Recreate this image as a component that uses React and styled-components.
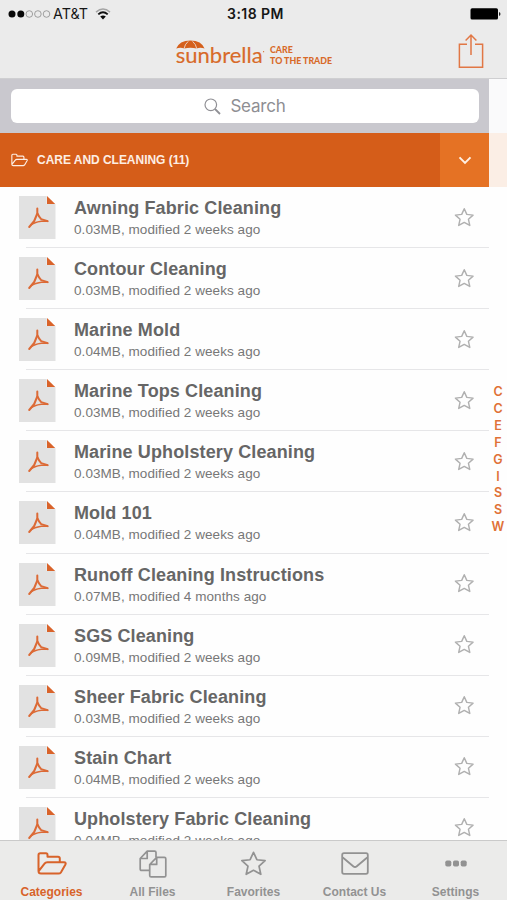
import React from "react";
import styled, { createGlobalStyle } from "styled-components";

const Global = createGlobalStyle`
  * { box-sizing: border-box; }
  body { margin: 0; background: #fff; overflow: hidden; }
  svg { display: block; flex: none; }
`;

const Screen = styled.div`
  width: 507px;
  height: 900px;
  display: flex;
  flex-direction: column;
  overflow: hidden;
  background: #fefefe;
  font-family: "Liberation Sans", Arial, sans-serif;
`;

const Header = styled.header`
  flex: none;
  height: 79px;
  background: #ebebeb;
  border-bottom: 1px solid #cfcfd1;
`;

const StatusBar = styled.div`
  height: 27px;
  display: grid;
  grid-template-columns: 1fr auto 1fr;
  align-items: center;
  padding: 0 6px 0 8px;
  font: 500 13.5px "Inter", sans-serif;
  color: #161616;
`;

const Carrier = styled.div`
  display: flex;
  align-items: center;
  font-weight: 400;
  letter-spacing: 0;
  span { margin: 0 7px 0 2px; font-size: 14.3px; }
`;

const Clock = styled.div`
  font-weight: 600;
  font-size: 14px;
  letter-spacing: 0.45px;
  padding-left: 2px;
`;

const Power = styled.div`
  display: flex;
  justify-content: flex-end;
`;

const NavBar = styled.div`
  height: 51px;
  display: flex;
  justify-content: space-between;
  padding: 6px 23px 0 175px;
`;

const Brand = styled.div`
  display: flex;
  color: #d86a29;
`;

const Tagline = styled.div`
  margin: 12px 0 0 5px;
  font: 900 8.8px/10.5px "Lato", sans-serif;
  letter-spacing: 0;
  white-space: nowrap;
`;

const Content = styled.main`
  flex: 1;
  min-height: 0;
  display: grid;
  grid-template-columns: 489px 18px;
  overflow: hidden;
`;

const Column = styled.div`
  min-width: 0;
`;

const SearchBar = styled.div`
  height: 54px;
  padding: 10px 10px 10px 11px;
  background: #c9c8ce;
`;

const SearchField = styled.div`
  height: 34px;
  border-radius: 6px;
  background: #fff;
  display: flex;
  align-items: center;
  justify-content: center;
  gap: 9px;
  color: #8e8e93;
  font: 400 17px "Inter", sans-serif;
  letter-spacing: -0.2px;
`;

const CategoryBar = styled.div`
  height: 54px;
  display: flex;
  align-items: center;
  background: #d55d19;
  color: #fdeee4;
  padding-left: 11px;
`;

const CategoryName = styled.div`
  flex: 1;
  margin-left: 9px;
  font-size: 12px;
  font-weight: 700;
  letter-spacing: -0.03px;
`;

const Toggle = styled.div`
  width: 49px;
  height: 100%;
  background: #e57224;
  display: flex;
  align-items: center;
  justify-content: center;
`;

const Row = styled.div`
  height: 61.1px;
  display: flex;
  align-items: flex-start;
  padding: 9px 15px 0 19px;
  background: linear-gradient(#e6e6e8, #e6e6e8) 26px 100% / 463px 1px no-repeat;
`;

const FileText = styled.div`
  flex: 1;
  margin-left: 18px;
  padding-top: 2px;
  white-space: nowrap;
`;

const FileName = styled.div`
  font-size: 18px;
  line-height: 21px;
  font-weight: 700;
  letter-spacing: 0.12px;
  color: #666;
`;

const FileMeta = styled.div`
  margin-top: 2px;
  font-size: 13.5px;
  line-height: 17px;
  letter-spacing: 0.06px;
  color: #777;
`;

const StarSlot = styled.div`
  padding-top: 10.5px;
`;

const IndexRail = styled.aside`
  display: flex;
  flex-direction: column;
`;

const RailCell = styled.div`
  height: 54px;
  flex: none;
  background: ${(p) => p.$tint};
`;

const Letters = styled.div`
  margin-top: 197px;
  display: flex;
  flex-direction: column;
  align-items: center;
  font: 600 12.5px/16.9px "Inter", sans-serif;
  color: #e07137;
`;

const TabBar = styled.nav`
  flex: none;
  height: 60px;
  display: grid;
  grid-template-columns: repeat(5, 101px);
  padding-left: 1px;
  border-top: 1px solid #cacaca;
  background: #ebebea;
`;

const Tab = styled.div`
  display: flex;
  flex-direction: column;
  align-items: center;
  color: ${(p) => (p.$active ? "#d8632a" : "#929292")};
  font-size: 12px;
  font-weight: 700;
  letter-spacing: 0;
  white-space: nowrap;
`;

const TabIcon = styled.div`
  height: 44px;
  padding-top: 1px;
  display: flex;
  align-items: center;
`;

const starPath =
  "M10 1.7 L12.5 7.2 L18.6 7.9 L14.1 12 L15.4 18 L10 15 L4.6 18 L5.9 12 L1.4 7.9 L7.5 7.2 Z";

const Star = ({ size = 20.5, color = "#b0b0b0", weight = 1.4 }) => (
  <svg width={size} height={size} viewBox="0 0 20 20" fill="none" stroke={color} strokeWidth={weight} strokeLinejoin="round">
    <path d={starPath} />
  </svg>
);

const Folder = ({ width, height, weight }) => (
  <svg width={width} height={height} viewBox="0 0 30 23" fill="none" stroke="currentColor" strokeWidth={weight} strokeLinejoin="round" strokeLinecap="round">
    <path d="M1.5 19V3Q1.5 1.3 3.2 1.3H9Q10.5 1.3 10.5 3V4.7H21Q22.8 4.7 22.8 6.5V10M1.5 19Q1.5 21.5 4 21.5H21.5Q23 21.5 24 20.3L28.3 12.7Q29.5 10.3 27 10.3H10.3Q8.5 10.3 7.5 11.7L1.7 19.2" />
  </svg>
);

const Pdf = () => (
  <svg width="37" height="43" viewBox="0 0 37 43">
    <path d="M0 0H27.7V8H36.5V43H0Z" fill="#e2e2e2" />
    <path d="M28 0L36.2 8H28Z" fill="#d9632a" />
    <g fill="none" stroke="#dc6a36" strokeLinecap="round" strokeLinejoin="round">
      <path d="M18.3 12.5V17.5L15.2 25L10.2 31" strokeWidth="2" />
      <path d="M18.5 17.5Q19.8 20.5 22.2 23.2L28.7 25.2" strokeWidth="1.9" />
      <path d="M11.8 29Q15 26.4 22.3 25.3L28.5 25.2" strokeWidth="1.4" />
    </g>
  </svg>
);

const Signal = () => (
  <svg width="43" height="10" viewBox="0 0 43 10">
    <circle cx="4" cy="5" r="3.5" fill="#080808" />
    <circle cx="12.8" cy="5" r="3.5" fill="#080808" />
    {[21.3, 29.9, 38.5].map((x) => (
      <circle key={x} cx={x} cy="5" r="3.3" fill="none" stroke="#8c8c8c" strokeWidth="0.8" />
    ))}
  </svg>
);

const Wifi = () => (
  <svg width="16" height="12" viewBox="0 0 16 12" fill="none">
    <path d="M1 4.1Q8 -2 15 4.1" stroke="#a4a4a4" strokeWidth="1.4" />
    <path d="M3.3 6.4Q8 2.1 12.7 6.4" stroke="#111" strokeWidth="1.9" />
    <path d="M5.2 8.6Q8 6.2 10.8 8.6L8 11.4Z" fill="#080808" />
  </svg>
);

const Battery = () => (
  <svg width="31" height="12" viewBox="0 0 31 12">
    <rect x="0.5" y="0.3" width="27.5" height="11.2" rx="1.6" fill="#000" />
    <path d="M29 4Q30.5 4.5 30.5 6T29 8Z" fill="#222" />
  </svg>
);

const Logo = () => (
  <svg width="90" height="34" viewBox="0 0 90 34">
    <path d="M1.2 15.6Q4.2 7.7 15.4 7.5Q26.6 7.7 29.6 15.6Q25.2 13.8 21.6 15.6Q15.4 14 9.2 15.6Q5.6 13.8 1.2 15.6Z" fill="#d5601c" />
    <path d="M9 15.8Q9.8 11.2 13.2 8.4M21.8 15.8Q21 11.2 17.6 8.4" fill="none" stroke="#ebebeb" strokeWidth="0.8" />
    <text x="0.7" y="30.3" textLength="87" lengthAdjust="spacingAndGlyphs" fontFamily="Lato" fontSize="22" fontWeight="400" fill="#d86a29" stroke="#d86a29" strokeWidth="0.15">sunbrella</text>
    <circle cx="88.6" cy="18.7" r="0.6" fill="#d86a29" />
  </svg>
);

const Share = () => (
  <svg width="26" height="36" viewBox="0 0 26 36" fill="none" stroke="#e17745" strokeWidth="1.5">
    <path d="M9 11.2H1.4V34.2H24.6V11.2H17M13 22V2.3M7.6 7.5L13 2L18.4 7.5" />
  </svg>
);

const Magnifier = () => (
  <svg width="17" height="17" viewBox="0 0 17 17" fill="none" stroke="#909095">
    <circle cx="6.8" cy="6.8" r="5.8" strokeWidth="1.2" />
    <path d="M11 11L16 16" strokeWidth="1.8" />
  </svg>
);

const Chevron = () => (
  <svg width="14" height="9" viewBox="0 0 14 9" fill="none" stroke="#fff0e4" strokeWidth="2">
    <path d="M1.5 1.4L7 6.9L12.5 1.4" />
  </svg>
);

const Files = () => (
  <svg width="28" height="28" viewBox="0 0 28 28" fill="none" stroke="currentColor" strokeWidth="1.7" strokeLinejoin="round">
    <path d="M10.7 20.4H2.6Q1.2 20.4 1.2 19V8.5L8.2 1.2H15.6Q17 1.2 17 2.6V7.4M1.5 8.5H8.2V1.6" />
    <path d="M10.7 14.5L17.7 7.3H25.4Q26.8 7.3 26.8 8.7V25.4Q26.8 26.8 25.4 26.8H12.1Q10.7 26.8 10.7 25.4ZM11 14.4H17.7V7.7" />
  </svg>
);

const Mail = () => (
  <svg width="28" height="23" viewBox="0 0 28 23" fill="none" stroke="currentColor" strokeWidth="1.8" strokeLinejoin="round">
    <rect x="1.2" y="1.2" width="25.6" height="20.6" rx="1.8" />
    <path d="M1.8 5.5L12.2 14.3Q14 15.8 15.8 14.3L26.2 5.5" />
  </svg>
);

const Dots = () => (
  <svg width="22" height="7" viewBox="0 0 22 7" fill="currentColor">
    {[0.3, 8, 15.7].map((x) => (
      <rect key={x} x={x} y="0.5" width="6" height="6" rx="1.7" />
    ))}
  </svg>
);

const files = [
  ["Awning Fabric Cleaning", "0.03MB, modified 2 weeks ago"],
  ["Contour Cleaning", "0.03MB, modified 2 weeks ago"],
  ["Marine Mold", "0.04MB, modified 2 weeks ago"],
  ["Marine Tops Cleaning", "0.03MB, modified 2 weeks ago"],
  ["Marine Upholstery Cleaning", "0.03MB, modified 2 weeks ago"],
  ["Mold 101", "0.04MB, modified 2 weeks ago"],
  ["Runoff Cleaning Instructions", "0.07MB, modified 4 months ago"],
  ["SGS Cleaning", "0.09MB, modified 2 weeks ago"],
  ["Sheer Fabric Cleaning", "0.03MB, modified 2 weeks ago"],
  ["Stain Chart", "0.04MB, modified 2 weeks ago"],
  ["Upholstery Fabric Cleaning", "0.04MB, modified 2 weeks ago"],
];

const tabs = [
  ["Categories", <Folder width={30} height={23} weight={2} />],
  ["All Files", <Files />],
  ["Favorites", <Star size={27} color="currentColor" weight={1.25} />],
  ["Contact Us", <Mail />],
  ["Settings", <Dots />],
];

export default function App() {
  return (
    <Screen>
      <Global />
      <Header>
        <StatusBar>
          <Carrier>
            <Signal />
            <span>AT&amp;T</span>
            <Wifi />
          </Carrier>
          <Clock>3:18 PM</Clock>
          <Power><Battery /></Power>
        </StatusBar>
        <NavBar>
          <Brand>
            <Logo />
            <Tagline>CARE<br />TO THE TRADE</Tagline>
          </Brand>
          <Share />
        </NavBar>
      </Header>
      <Content>
        <Column>
          <SearchBar>
            <SearchField>
              <Magnifier />
              <span>Search</span>
            </SearchField>
          </SearchBar>
          <CategoryBar>
            <Folder width={17} height={14} weight={2} />
            <CategoryName>CARE AND CLEANING (11)</CategoryName>
            <Toggle><Chevron /></Toggle>
          </CategoryBar>
          {files.map(([name, meta]) => (
            <Row key={name}>
              <Pdf />
              <FileText>
                <FileName>{name}</FileName>
                <FileMeta>{meta}</FileMeta>
              </FileText>
              <StarSlot><Star /></StarSlot>
            </Row>
          ))}
        </Column>
        <IndexRail>
          <RailCell $tint="#fafafb" />
          <RailCell $tint="#fbeee5" />
          <Letters>
            {"CCEFGISSW".split("").map((letter, i) => (
              <span key={i}>{letter}</span>
            ))}
          </Letters>
        </IndexRail>
      </Content>
      <TabBar>
        {tabs.map(([label, icon], i) => (
          <Tab key={label} $active={i === 0}>
            <TabIcon>{icon}</TabIcon>
            {label}
          </Tab>
        ))}
      </TabBar>
    </Screen>
  );
}
